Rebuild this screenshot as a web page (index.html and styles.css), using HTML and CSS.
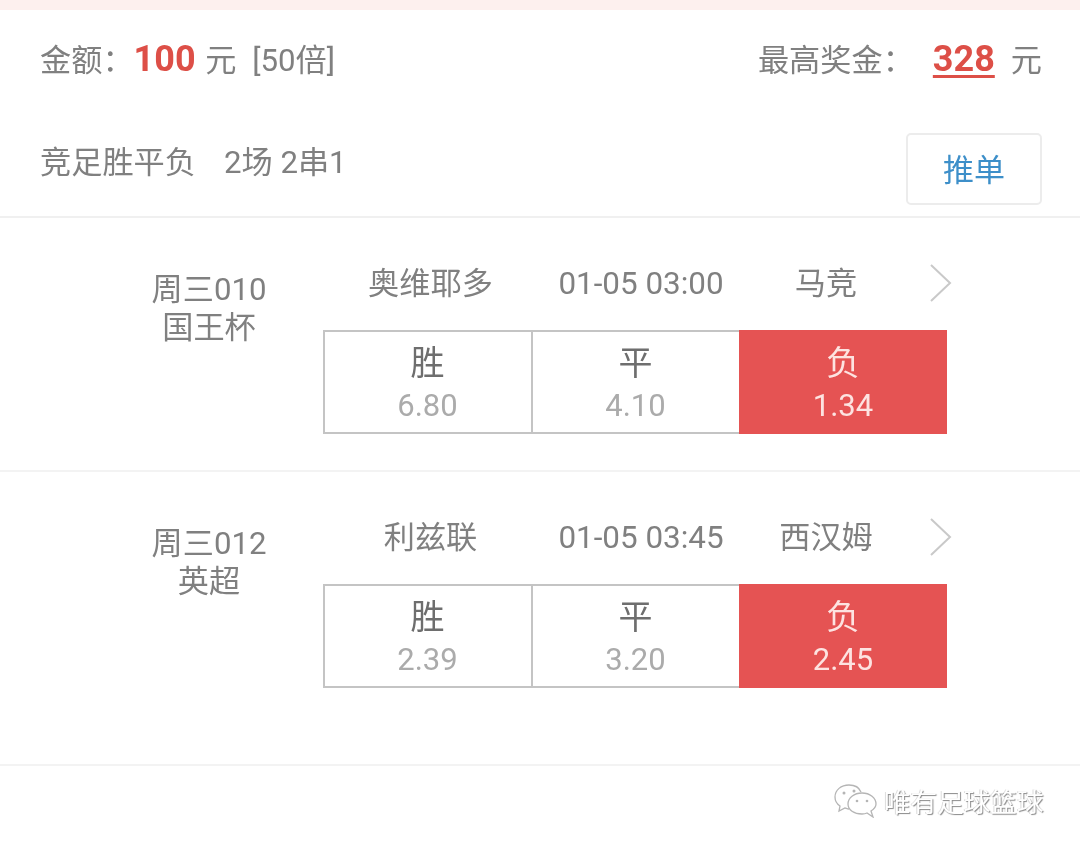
FILE: index.html
```html
<!DOCTYPE html>
<html lang="zh-CN">

<head>
    <meta charset="UTF-8">
    <meta name="viewport" content="width=device-width, initial-scale=1.0">
    <title>方案详情</title>
    <link rel="stylesheet" href="styles.css">
</head>

<body>
    <div class="top-strip"></div>

    <div class="summary">
        <div class="summary-row">
            <div class="amount">金额：<b class="red">100</b> 元 <span class="times">[50倍]</span></div>
            <div class="prize">最高奖金：<b class="red prize-num">328</b>元</div>
        </div>
        <div class="play-row">
            <div class="play">竞足胜平负<span class="play-count">2场 2串1</span></div>
            <button class="push-btn">推单</button>
        </div>
    </div>

    <div class="match">
        <div class="match-id">周三010<br>国王杯</div>
        <div class="match-main">
            <div class="teams">
                <span class="team-home">奥维耶多</span>
                <span class="team-time">01-05 03:00</span>
                <span class="team-away">马竞</span>
                <svg class="arrow" width="24" height="40" viewBox="0 0 24 40"><path d="M2 2 L21 20 L2 38" fill="none" stroke="#c9c9c9" stroke-width="2"/></svg>
            </div>
            <div class="odds">
                <div class="odd"><div class="odd-name">胜</div><div class="odd-num">6.80</div></div>
                <div class="odd"><div class="odd-name">平</div><div class="odd-num">4.10</div></div>
                <div class="odd on"><div class="odd-name">负</div><div class="odd-num">1.34</div></div>
            </div>
        </div>
    </div>

    <div class="match match-last">
        <div class="match-id">周三012<br>英超</div>
        <div class="match-main">
            <div class="teams">
                <span class="team-home">利兹联</span>
                <span class="team-time">01-05 03:45</span>
                <span class="team-away">西汉姆</span>
                <svg class="arrow" width="24" height="40" viewBox="0 0 24 40"><path d="M2 2 L21 20 L2 38" fill="none" stroke="#c9c9c9" stroke-width="2"/></svg>
            </div>
            <div class="odds">
                <div class="odd"><div class="odd-name">胜</div><div class="odd-num">2.39</div></div>
                <div class="odd"><div class="odd-name">平</div><div class="odd-num">3.20</div></div>
                <div class="odd on"><div class="odd-name">负</div><div class="odd-num">2.45</div></div>
            </div>
        </div>
    </div>

    <div class="watermark">
        <svg width="44" height="34" viewBox="0 0 44 34">
            <path d="M27 8 C25 3 20 1 15 1 C7 1 1 6 1 13 C1 17 3 20 6 22 L5 27 L11 24 C12 24 13 25 15 25" fill="#fff" stroke="#b5b5b5" stroke-width="1.3"/>
            <path d="M28 9 C20 9 14 14 14 20 C14 26 20 30 28 30 C30 30 31 30 33 29 L39 33 L37 27 C40 25 42 23 42 20 C42 14 36 9 28 9 Z" fill="#fff" stroke="#b5b5b5" stroke-width="1.3"/>
            <circle cx="10" cy="9" r="1.5" fill="#b5b5b5"/>
            <circle cx="20" cy="7" r="1.5" fill="#b5b5b5"/>
            <circle cx="23" cy="17" r="1.3" fill="#b5b5b5"/>
            <circle cx="33" cy="17" r="1.3" fill="#b5b5b5"/>
        </svg>
        <span class="wm-text">唯有足球篮球</span>
    </div>
</body>

</html>
```

FILE: styles.css
```css
* {
    box-sizing: border-box;
}

body {
    margin: 0;
    height: 850px;
    overflow: hidden;
    background-color: #fff;
    color: #808080;
    font-family: Roboto, 'Noto Sans CJK SC', sans-serif;
    font-size: 31.2px;
    filter: blur(0.6px);
}

.top-strip {
    height: 10px;
    background-color: #fdf0ee;
}

.red {
    color: #dd4f47;
}

/* 顶部汇总 */
.summary {
    height: 208px;
    padding: 0 38px 0 40px;
    border-bottom: 2px solid #f0f0f0;
}

.summary-row {
    display: flex;
    justify-content: space-between;
    align-items: center;
    height: 94px;
}

.amount b {
    font-size: 36px;
    margin: 0 2px 0 0;
}

.times {
    margin-left: 8px;
}

.prize-num {
    font-size: 36px;
    margin: 0 16px 0 19px;
    text-decoration: underline;
    text-underline-offset: 4px;
}

.play-row {
    display: flex;
    justify-content: space-between;
    align-items: flex-start;
    padding-top: 29px;
}

.play {
    line-height: 60px;
}

.play-count {
    margin-left: 28px;
}

.push-btn {
    width: 136px;
    height: 72px;
    padding: 0 0 4px;
    background-color: #fff;
    border: 2px solid #ececec;
    border-radius: 5px;
    color: #3d8fc9;
    font-family: inherit;
    font-size: 31px;
}

/* 比赛 */
.match {
    display: flex;
    height: 254px;
    border-bottom: 2px solid #f3f3f3;
}

.match-last {
    height: 294px;
}

.match-id {
    width: 323px;
    padding: 53px 0 0 95px;
    text-align: center;
    line-height: 38px;
}

.match-main {
    width: 640px;
}

.teams {
    display: flex;
    align-items: center;
    height: 112px;
    padding-top: 13px;
    text-align: center;
}

.team-home {
    width: 215px;
}

.team-time {
    width: 206px;
    padding-top: 6px;
    font-size: 31.4px;
}

.team-away {
    width: 198px;
    margin-left: -17px;
}

.arrow {
    margin: 5px 0 0 4px;
}

.odds {
    display: flex;
    width: 624px;
    height: 104px;
    border: 2px solid #c4c4c4;
}

.odd {
    width: 206px;
    padding: 6px 1px 0 0;
    text-align: center;
}

.odd + .odd {
    width: 208px;
    border-left: 2px solid #c4c4c4;
}

.odd-name {
    font-size: 34px;
    line-height: 50px;
    color: #6e6e6e;
}

.odd-num {
    font-size: 31px;
    line-height: 35px;
    color: #ababab;
}

.odd.on {
    width: 208px;
    margin: -2px -2px -2px 0;
    padding: 8px 0 0;
    border-left: 0;
    background-color: #e55353;
}

.odd.on .odd-name,
.odd.on .odd-num {
    color: #fde3e1;
}

/* 水印 */
.watermark {
    position: absolute;
    left: 834px;
    top: 781px;
    display: flex;
    align-items: center;
    gap: 6px;
    color: #fff;
    font-size: 26.6px;
    text-shadow: 1px 1px 1px #8a8a8a, -1px 0 0 #ddd;
}
```
